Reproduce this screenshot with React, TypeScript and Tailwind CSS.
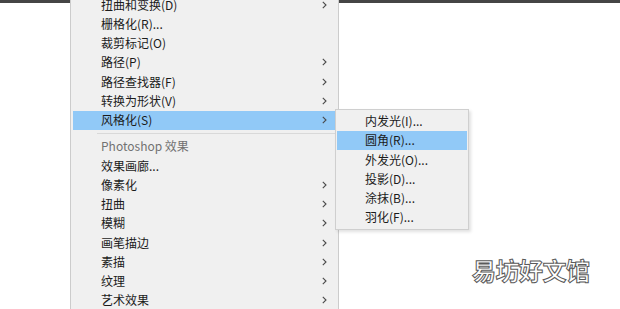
import React from 'react';

type Item = { label: string; arrow?: boolean; muted?: boolean; active?: boolean };

const topItems: Item[] = [
  { label: '扭曲和变换(D)', arrow: true },
  { label: '栅格化(R)...' },
  { label: '裁剪标记(O)' },
  { label: '路径(P)', arrow: true },
  { label: '路径查找器(F)', arrow: true },
  { label: '转换为形状(V)', arrow: true },
  { label: '风格化(S)', arrow: true, active: true },
];

const psItems: Item[] = [
  { label: 'Photoshop 效果', muted: true },
  { label: '效果画廊...' },
  { label: '像素化', arrow: true },
  { label: '扭曲', arrow: true },
  { label: '模糊', arrow: true },
  { label: '画笔描边', arrow: true },
  { label: '素描', arrow: true },
  { label: '纹理', arrow: true },
  { label: '艺术效果', arrow: true },
];

const subItems = ['内发光(I)...', '圆角(R)...', '外发光(O)...', '投影(D)...', '涂抹(B)...', '羽化(F)...'];

const Chevron = () => (
  <svg width="5" height="8" viewBox="0 0 5 8" className="shrink-0">
    <path d="M0.8 0.8 L4 4 L0.8 7.2" fill="none" stroke="#4a4a4a" strokeWidth="1.1" />
  </svg>
);

const SubMenu = () => (
  <div className="absolute left-[262px] top-[-2px] w-[134px] bg-[#f0f0f0] border border-[#cfcfcf] py-[2px] shadow-[2px_2px_3px_rgba(0,0,0,0.12)]">
    {subItems.map((s, i) => (
      <div
        key={s}
        className={`mx-px h-[19.25px] flex items-center pl-[28px] text-[12px] text-[#1b1b1b] ${i === 1 ? 'bg-[#91c9f7]' : ''}`}
      >
        {s}
      </div>
    ))}
  </div>
);

const Row: React.FC<{ item: Item }> = ({ item }) => (
  <div className={`relative mx-[2px] h-[19.25px] flex items-center justify-between pl-[28px] pr-[9px] ${item.active ? 'bg-[#91c9f7]' : ''}`}>
    <span className={`text-[12px] ${item.muted ? 'text-[#727272]' : 'text-[#1b1b1b]'}`}>{item.label}</span>
    {item.arrow && <Chevron />}
    {item.active && <SubMenu />}
  </div>
);

export default function App() {
  return (
    <div
      className="relative w-[620px] h-[309px] overflow-hidden bg-white"
      style={{ fontFamily: '"Noto Sans CJK SC", "Noto Sans", sans-serif' }}
    >
      <div className="h-[3px] bg-[#454545]" />

      <div className="absolute left-[70px] top-0 w-[269px] h-[309px] bg-[#f0f0f0] border-x border-[#cccccc]">
        <div className="mt-[-5px]">
          {topItems.map((it) => (
            <Row key={it.label} item={it} />
          ))}
          <div className="h-[7px] flex items-center pl-[26px] pr-[3px]">
            <div className="h-px w-full bg-[#d9d9d9]" />
          </div>
          {psItems.map((it) => (
            <Row key={it.label} item={it} />
          ))}
        </div>
      </div>

      <div className="absolute left-[472px] top-[258px] text-[24px] leading-none font-bold tracking-[-0.5px] text-white [-webkit-text-stroke:1px_#5a5a5a]">
        易坊好文馆
      </div>
    </div>
  );
}
